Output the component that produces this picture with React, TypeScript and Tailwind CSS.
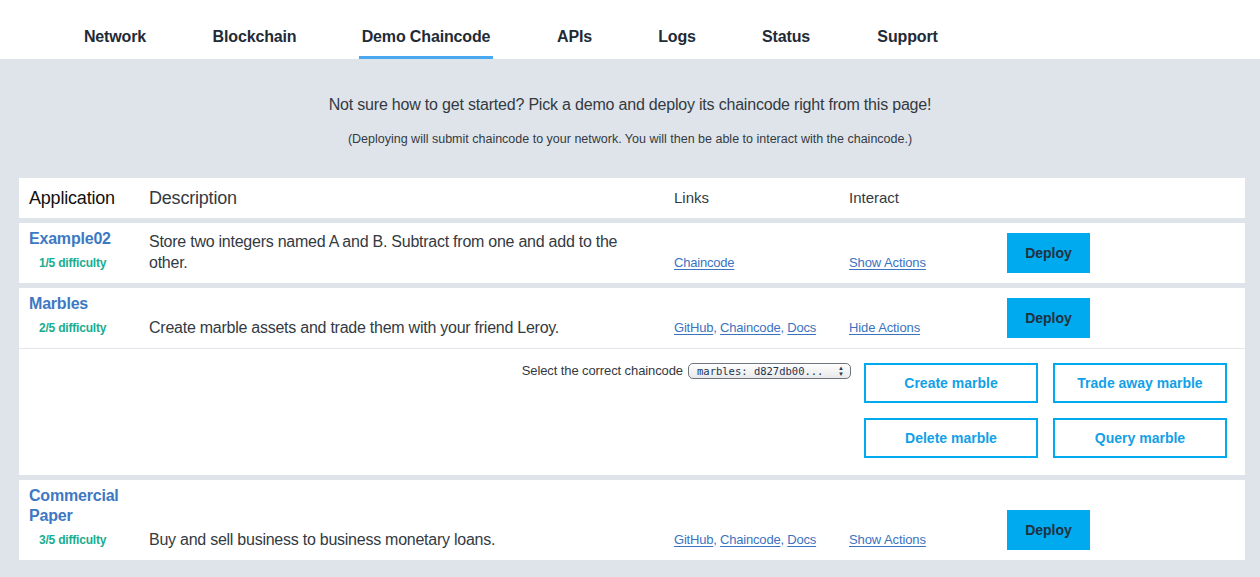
import React from "react";

const tabs = [
  { label: "Network", w: "w-[70px]" },
  { label: "Blockchain", w: "w-[87px]" },
  { label: "Demo Chaincode", w: "w-[134px]" },
  { label: "APIs", w: "w-[41px]" },
  { label: "Logs", w: "w-[42px]" },
  { label: "Status", w: "w-[54px]" },
  { label: "Support", w: "w-[67px]" },
];

const Nav: React.FC = () => (
  <div className="h-[59px] bg-white flex pl-[80px] gap-[61px]">
    {tabs.map((t) => (
      <div
        key={t.label}
        className={`${t.w} h-full pt-[18px] flex items-center justify-center whitespace-nowrap border-b-[3px] text-[16px] font-bold tracking-[-0.15px] text-[#1f2b37] ${
          t.label === "Demo Chaincode" ? "border-[#4aa8f0]" : "border-transparent"
        }`}
      >
        {t.label}
      </div>
    ))}
  </div>
);

const LinkText: React.FC<{ children: React.ReactNode }> = ({ children }) => (
  <span className="underline underline-offset-2 text-[#3b73bf]">{children}</span>
);

const AppCell: React.FC<{ name: string; level: string }> = ({ name, level }) => (
  <div className="w-[120px] shrink-0 px-[10px]">
    <div className="text-[16px] font-bold leading-[20px] tracking-[-0.2px] text-[#3d79c2] mb-[4px]">{name}</div>
    <div className="pl-[10px] text-[12px] font-bold leading-[20px] tracking-[-0.2px] text-[#17ad90]">{level}</div>
  </div>
);

const DeployBtn: React.FC = () => (
  <div className="w-[83px] h-[40px] bg-[#00aaef] flex items-center justify-center text-[14px] font-bold text-[#1f3140]">
    Deploy
  </div>
);

const Row: React.FC<{
  name: string;
  level: string;
  desc: string;
  links: string[];
  action: string;
  height: string;
}> = ({ name, level, desc, links, action, height }) => (
  <div className={`flex items-end pb-[10px] ${height}`}>
    <AppCell name={name} level={level} />
    <div className="w-[525px] shrink-0 px-[10px] text-[16px] leading-[21px] tracking-[-0.25px] text-[#333a42]">
      {desc}
    </div>
    <div className="w-[175px] shrink-0 px-[10px] text-[13px] leading-[20px] tracking-[-0.2px] text-[#3b73bf]">
      {links.map((l, i) => (
        <React.Fragment key={l}>
          <LinkText>{l}</LinkText>
          {i < links.length - 1 ? ", " : ""}
        </React.Fragment>
      ))}
    </div>
    <div className="w-[158px] shrink-0 px-[10px] text-[13px] leading-[20px] tracking-[-0.1px]">
      <LinkText>{action}</LinkText>
    </div>
    <div className="px-[10px]">
      <DeployBtn />
    </div>
  </div>
);

const ActionBtn: React.FC<{ label: string }> = ({ label }) => (
  <div className="h-[40px] border-2 border-[#00aaef] flex items-center justify-center pt-[1px] text-[14px] font-bold text-[#12a1e6]">
    {label}
  </div>
);

export default function App() {
  return (
    <div className="min-h-[577px] bg-[#dfe4ea] font-['Liberation_Sans',Arial,sans-serif]">
      <Nav />
      <div className="pt-[36px] text-center text-[#333a42]">
        <p className="text-[16px] leading-[20px] tracking-[-0.2px]">
          Not sure how to get started? Pick a demo and deploy its chaincode right from this page!
        </p>
        <p className="mt-[16px] text-[12.5px] leading-[16px]">
          (Deploying will submit chaincode to your network. You will then be able to interact with the chaincode.)
        </p>
      </div>

      <div className="mt-[31px] ml-[19px] mr-[15px] flex flex-col gap-[5px]">
        <div className="bg-white h-[40px] flex items-center">
          <div className="w-[120px] px-[10px] text-[18px] tracking-[-0.2px] text-[#111]">Application</div>
          <div className="w-[525px] px-[10px] text-[18px] tracking-[-0.2px] text-[#333a42]">Description</div>
          <div className="w-[175px] px-[10px] text-[15px] text-[#333a42]">Links</div>
          <div className="w-[158px] px-[10px] text-[15px] text-[#333a42]">Interact</div>
        </div>

        <div className="bg-white">
          <Row
            name="Example02"
            level="1/5 difficulty"
            desc="Store two integers named A and B. Subtract from one and add to the other."
            links={["Chaincode"]}
            action="Show Actions"
            height="h-[60px]"
          />
        </div>

        <div className="bg-white">
          <Row
            name="Marbles"
            level="2/5 difficulty"
            desc="Create marble assets and trade them with your friend Leroy."
            links={["GitHub", "Chaincode", "Docs"]}
            action="Hide Actions"
            height="h-[60px]"
          />
          <div className="border-t border-[#e3e7ec] flex justify-end pt-[14px] pb-[17px] pr-[18px]">
            <div className="flex items-center h-[16px]">
              <span className="text-[13px] tracking-[-0.1px] text-[#333a42]">Select the correct chaincode</span>
              <div className="ml-[5px] w-[163px] h-[16px] rounded-[5px] border border-[#6f757c] bg-gradient-to-b from-white to-[#e9e9e9] flex items-center justify-between pl-[8px] pr-[6px]">
                <span className="font-['DejaVu_Sans_Mono',monospace] text-[10.5px] leading-none text-[#1c3553]">
                  marbles: d827db00...
                </span>
                <span className="flex flex-col text-[6px] leading-[6px] text-[#2a3a4a]">
                  <span>▲</span>
                  <span>▼</span>
                </span>
              </div>
            </div>
            <div className="ml-[13px] grid grid-cols-[174px_174px] gap-[15px]">
              <ActionBtn label="Create marble" />
              <ActionBtn label="Trade away marble" />
              <ActionBtn label="Delete marble" />
              <ActionBtn label="Query marble" />
            </div>
          </div>
        </div>

        <div className="bg-white">
          <Row
            name="Commercial Paper"
            level="3/5 difficulty"
            desc="Buy and sell business to business monetary loans."
            links={["GitHub", "Chaincode", "Docs"]}
            action="Show Actions"
            height="h-[80px]"
          />
        </div>
      </div>
    </div>
  );
}
